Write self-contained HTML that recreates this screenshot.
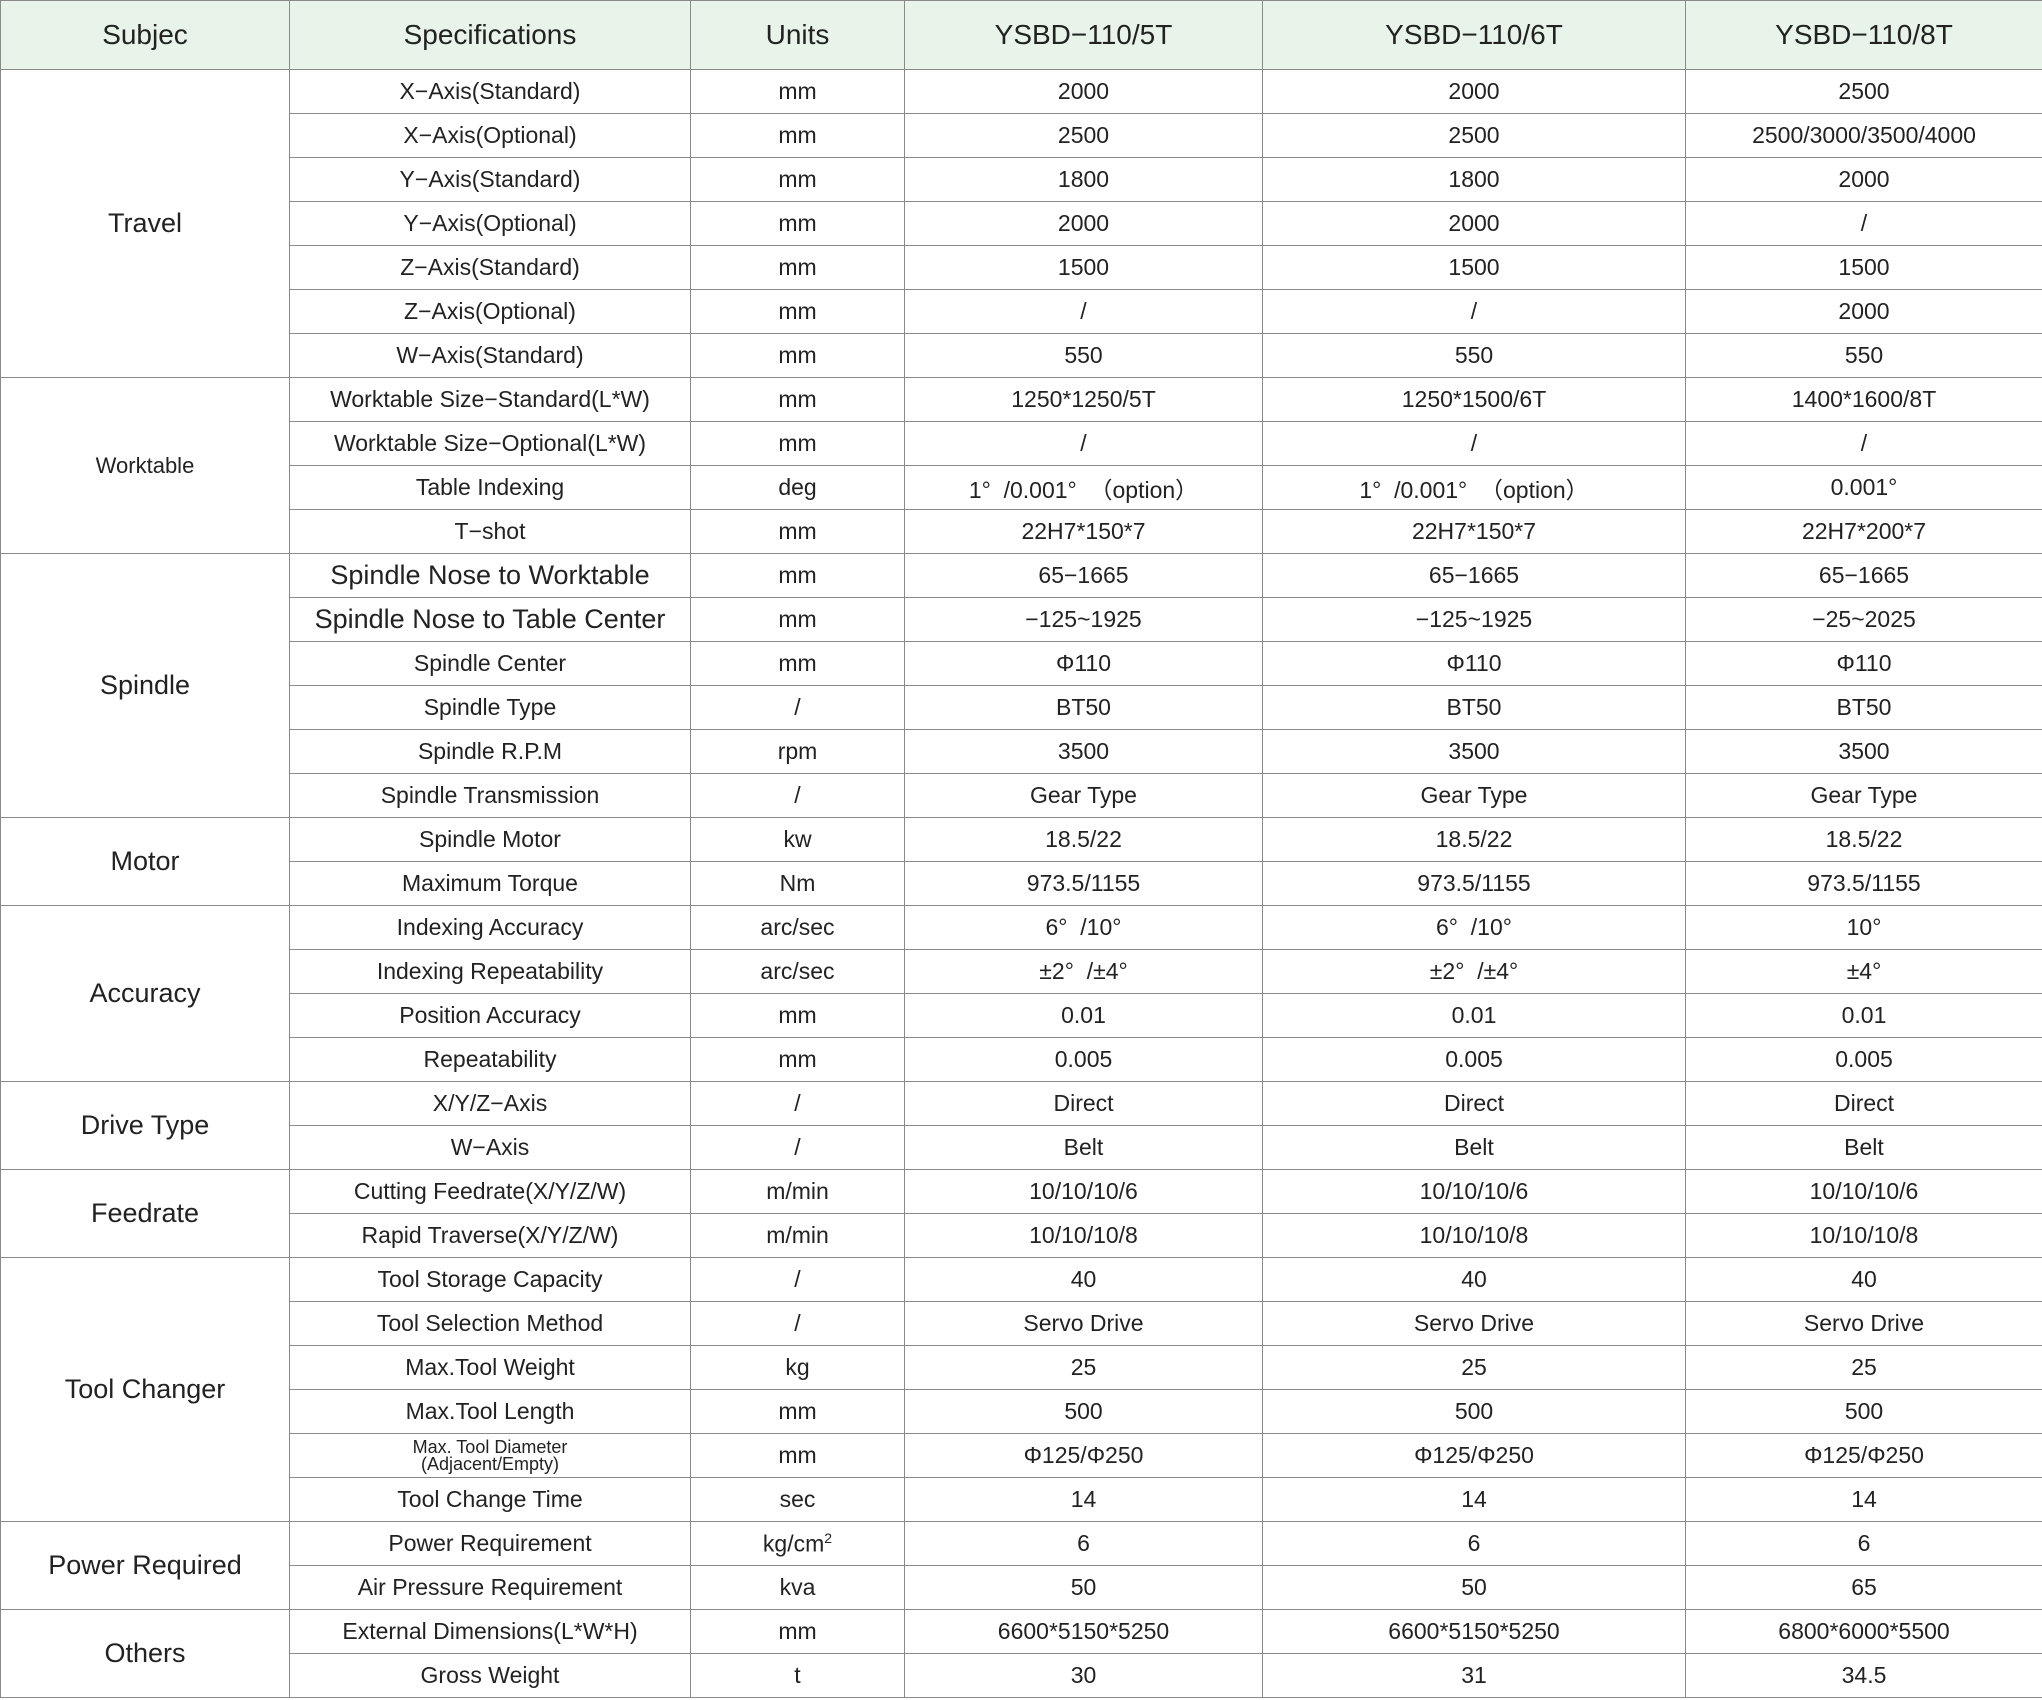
<!DOCTYPE html>
<html><head><meta charset="utf-8"><style>
html,body{margin:0;padding:0;background:#fff;}
body{width:2042px;height:1700px;overflow:hidden;}
table{border-collapse:collapse;table-layout:fixed;width:2042px;font-family:"Liberation Sans","Noto Sans CJK KR",sans-serif;color:#222;}
td,th{border:1.5px solid #8a8a8a;text-align:center;vertical-align:middle;padding:0;font-weight:normal;font-size:23px;height:43px;white-space:nowrap;overflow:hidden;}
th{background:#e8f3ea;font-size:28px;height:68px;}
td.s{font-size:27px;}
td.sm{font-size:22px;}
td.big{font-size:27px;}
td.tiny{font-size:18px;line-height:17px;}
</style></head><body>
<table>
<colgroup><col style="width:289px"><col style="width:401px"><col style="width:214px"><col style="width:358px"><col style="width:423px"><col style="width:357px"></colgroup>
<tr><th>Subjec</th><th>Specifications</th><th>Units</th><th>YSBD−110/5T</th><th>YSBD−110/6T</th><th>YSBD−110/8T</th></tr>
<tr><td class="s" rowspan="7">Travel</td><td>X−Axis(Standard)</td><td>mm</td><td>2000</td><td>2000</td><td>2500</td></tr>
<tr><td>X−Axis(Optional)</td><td>mm</td><td>2500</td><td>2500</td><td>2500/3000/3500/4000</td></tr>
<tr><td>Y−Axis(Standard)</td><td>mm</td><td>1800</td><td>1800</td><td>2000</td></tr>
<tr><td>Y−Axis(Optional)</td><td>mm</td><td>2000</td><td>2000</td><td>/</td></tr>
<tr><td>Z−Axis(Standard)</td><td>mm</td><td>1500</td><td>1500</td><td>1500</td></tr>
<tr><td>Z−Axis(Optional)</td><td>mm</td><td>/</td><td>/</td><td>2000</td></tr>
<tr><td>W−Axis(Standard)</td><td>mm</td><td>550</td><td>550</td><td>550</td></tr>
<tr><td class="sm" rowspan="4">Worktable</td><td>Worktable Size−Standard(L*W)</td><td>mm</td><td>1250*1250/5T</td><td>1250*1500/6T</td><td>1400*1600/8T</td></tr>
<tr><td>Worktable Size−Optional(L*W)</td><td>mm</td><td>/</td><td>/</td><td>/</td></tr>
<tr><td>Table Indexing</td><td>deg</td><td>1°&nbsp;&nbsp;/0.001°&nbsp;&nbsp;（option）</td><td>1°&nbsp;&nbsp;/0.001°&nbsp;&nbsp;（option）</td><td>0.001°</td></tr>
<tr><td>T−shot</td><td>mm</td><td>22H7*150*7</td><td>22H7*150*7</td><td>22H7*200*7</td></tr>
<tr><td class="s" rowspan="6">Spindle</td><td class="big">Spindle Nose to Worktable</td><td>mm</td><td>65−1665</td><td>65−1665</td><td>65−1665</td></tr>
<tr><td class="big">Spindle Nose to Table Center</td><td>mm</td><td>−125~1925</td><td>−125~1925</td><td>−25~2025</td></tr>
<tr><td>Spindle Center</td><td>mm</td><td>Φ110</td><td>Φ110</td><td>Φ110</td></tr>
<tr><td>Spindle Type</td><td>/</td><td>BT50</td><td>BT50</td><td>BT50</td></tr>
<tr><td>Spindle R.P.M</td><td>rpm</td><td>3500</td><td>3500</td><td>3500</td></tr>
<tr><td>Spindle Transmission</td><td>/</td><td>Gear Type</td><td>Gear Type</td><td>Gear Type</td></tr>
<tr><td class="s" rowspan="2">Motor</td><td>Spindle Motor</td><td>kw</td><td>18.5/22</td><td>18.5/22</td><td>18.5/22</td></tr>
<tr><td>Maximum Torque</td><td>Nm</td><td>973.5/1155</td><td>973.5/1155</td><td>973.5/1155</td></tr>
<tr><td class="s" rowspan="4">Accuracy</td><td>Indexing Accuracy</td><td>arc/sec</td><td>6°&nbsp;&nbsp;/10°</td><td>6°&nbsp;&nbsp;/10°</td><td>10°</td></tr>
<tr><td>Indexing Repeatability</td><td>arc/sec</td><td>±2°&nbsp;&nbsp;/±4°</td><td>±2°&nbsp;&nbsp;/±4°</td><td>±4°</td></tr>
<tr><td>Position Accuracy</td><td>mm</td><td>0.01</td><td>0.01</td><td>0.01</td></tr>
<tr><td>Repeatability</td><td>mm</td><td>0.005</td><td>0.005</td><td>0.005</td></tr>
<tr><td class="s" rowspan="2">Drive Type</td><td>X/Y/Z−Axis</td><td>/</td><td>Direct</td><td>Direct</td><td>Direct</td></tr>
<tr><td>W−Axis</td><td>/</td><td>Belt</td><td>Belt</td><td>Belt</td></tr>
<tr><td class="s" rowspan="2">Feedrate</td><td>Cutting Feedrate(X/Y/Z/W)</td><td>m/min</td><td>10/10/10/6</td><td>10/10/10/6</td><td>10/10/10/6</td></tr>
<tr><td>Rapid Traverse(X/Y/Z/W)</td><td>m/min</td><td>10/10/10/8</td><td>10/10/10/8</td><td>10/10/10/8</td></tr>
<tr><td class="s" rowspan="6">Tool Changer</td><td>Tool Storage Capacity</td><td>/</td><td>40</td><td>40</td><td>40</td></tr>
<tr><td>Tool Selection Method</td><td>/</td><td>Servo Drive</td><td>Servo Drive</td><td>Servo Drive</td></tr>
<tr><td>Max.Tool Weight</td><td>kg</td><td>25</td><td>25</td><td>25</td></tr>
<tr><td>Max.Tool Length</td><td>mm</td><td>500</td><td>500</td><td>500</td></tr>
<tr><td class="tiny">Max. Tool Diameter<br>(Adjacent/Empty)</td><td>mm</td><td>Φ125/Φ250</td><td>Φ125/Φ250</td><td>Φ125/Φ250</td></tr>
<tr><td>Tool Change Time</td><td>sec</td><td>14</td><td>14</td><td>14</td></tr>
<tr><td class="s" rowspan="2">Power Required</td><td>Power Requirement</td><td>kg/cm<sup style="font-size:14px">2</sup></td><td>6</td><td>6</td><td>6</td></tr>
<tr><td>Air Pressure Requirement</td><td>kva</td><td>50</td><td>50</td><td>65</td></tr>
<tr><td class="s" rowspan="2">Others</td><td>External Dimensions(L*W*H)</td><td>mm</td><td>6600*5150*5250</td><td>6600*5150*5250</td><td>6800*6000*5500</td></tr>
<tr><td>Gross Weight</td><td>t</td><td>30</td><td>31</td><td>34.5</td></tr>
</table>
</body></html>
